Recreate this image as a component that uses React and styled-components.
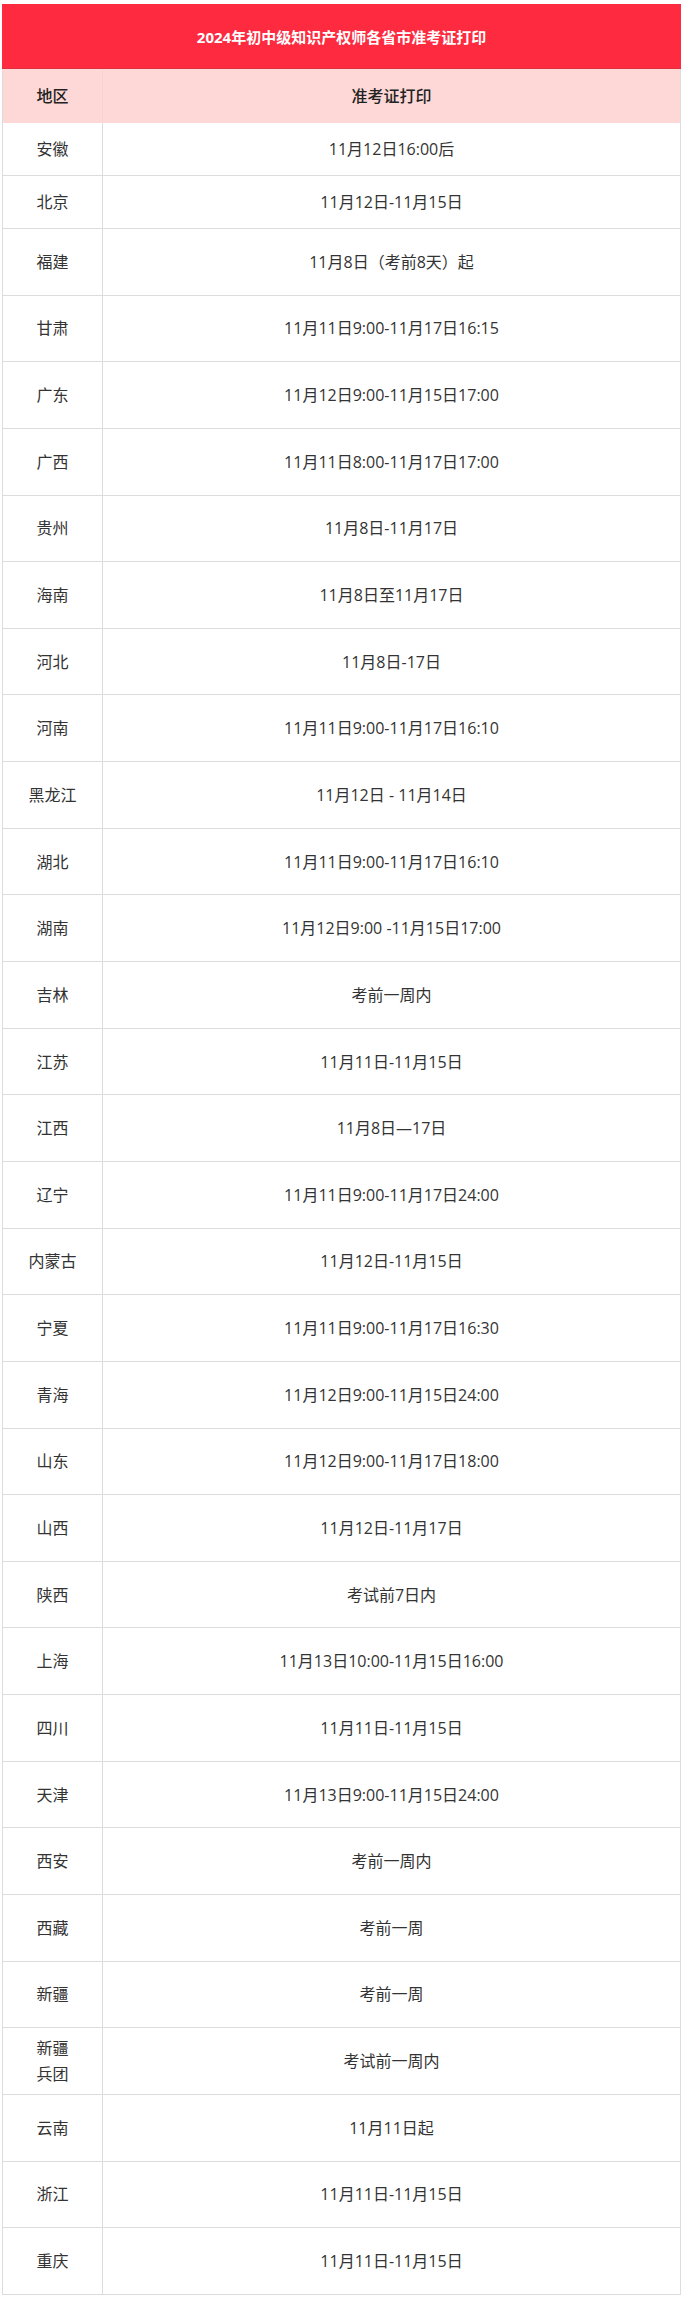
import React from "react";
import styled, { createGlobalStyle } from "styled-components";

// 各省准考证打印时间表

const GlobalStyle = createGlobalStyle`
  body {
    margin: 0;
    background: #fff;
    font-family: "Open Sans", "Noto Sans CJK SC", "Noto Sans", sans-serif;
  }
`;

const Page = styled.div`
  padding: 4px 0 10px 2px;
`;

const Table = styled.div`
  width: 677px;
  display: grid;
  grid-template-columns: 100px 1fr;
  border-left: 1px solid #dcdcdc;
  border-right: 1px solid #dcdcdc;
`;

const TitleCell = styled.div`
  grid-column: 1 / span 2;
  height: 65px;
  box-sizing: border-box;
  display: flex;
  align-items: center;
  justify-content: center;
  background: #fe2a40;
  border-bottom: 1px solid #e0303f;
  color: #fff;
  font-size: 15px;
  font-weight: bold;
  margin: 0 -1px;
`;

const Cell = styled.div`
  height: ${(p) => p.$h}px;
  box-sizing: border-box;
  display: flex;
  flex-direction: column;
  align-items: center;
  justify-content: center;
  text-align: center;
  font-size: 16px;
  line-height: 26px;
  color: ${(p) => (p.$head ? "#222" : "#333")};
  font-weight: ${(p) => (p.$head ? 500 : 400)};
  background: ${(p) => (p.$head ? "#fdd8d6" : "#fff")};
  border-bottom: 1px solid ${(p) => (p.$head ? "#fdd8d6" : "#dcdcdc")};
  border-right: ${(p) => (p.$first ? `1px solid ${p.$head ? "#f6d2d0" : "#dcdcdc"}` : "none")};
`;

const rows = [
  ["安徽", "11月12日16:00后", true],
  ["北京", "11月12日-11月15日", true],
  ["福建", "11月8日（考前8天）起"],
  ["甘肃", "11月11日9:00-11月17日16:15"],
  ["广东", "11月12日9:00-11月15日17:00"],
  ["广西", "11月11日8:00-11月17日17:00"],
  ["贵州", "11月8日-11月17日"],
  ["海南", "11月8日至11月17日"],
  ["河北", "11月8日-17日"],
  ["河南", "11月11日9:00-11月17日16:10"],
  ["黑龙江", "11月12日 - 11月14日"],
  ["湖北", "11月11日9:00-11月17日16:10"],
  ["湖南", "11月12日9:00 -11月15日17:00"],
  ["吉林", "考前一周内"],
  ["江苏", "11月11日-11月15日"],
  ["江西", "11月8日—17日"],
  ["辽宁", "11月11日9:00-11月17日24:00"],
  ["内蒙古", "11月12日-11月15日"],
  ["宁夏", "11月11日9:00-11月17日16:30"],
  ["青海", "11月12日9:00-11月15日24:00"],
  ["山东", "11月12日9:00-11月17日18:00"],
  ["山西", "11月12日-11月17日"],
  ["陕西", "考试前7日内"],
  ["上海", "11月13日10:00-11月15日16:00"],
  ["四川", "11月11日-11月15日"],
  ["天津", "11月13日9:00-11月15日24:00"],
  ["西安", "考前一周内"],
  ["西藏", "考前一周"],
  ["新疆", "考前一周"],
  [["新疆", "兵团"], "考试前一周内"],
  ["云南", "11月11日起"],
  ["浙江", "11月11日-11月15日"],
  ["重庆", "11月11日-11月15日"],
];

function App() {
  return (
    <Page>
      <GlobalStyle />
      <Table>
        <TitleCell>2024年初中级知识产权师各省市准考证打印</TitleCell>
        <Cell $head $first $h={54}>地区</Cell>
        <Cell $head $h={54}>准考证打印</Cell>
        {rows.map(([region, date, short], i) => {
          const h = short ? 53 : 66.65;
          return (
            <React.Fragment key={i}>
              <Cell $first $h={h}>
                {Array.isArray(region)
                  ? region.map((r) => <span key={r}>{r}</span>)
                  : region}
              </Cell>
              <Cell $h={h}>{date}</Cell>
            </React.Fragment>
          );
        })}
      </Table>
    </Page>
  );
}

export default App;
